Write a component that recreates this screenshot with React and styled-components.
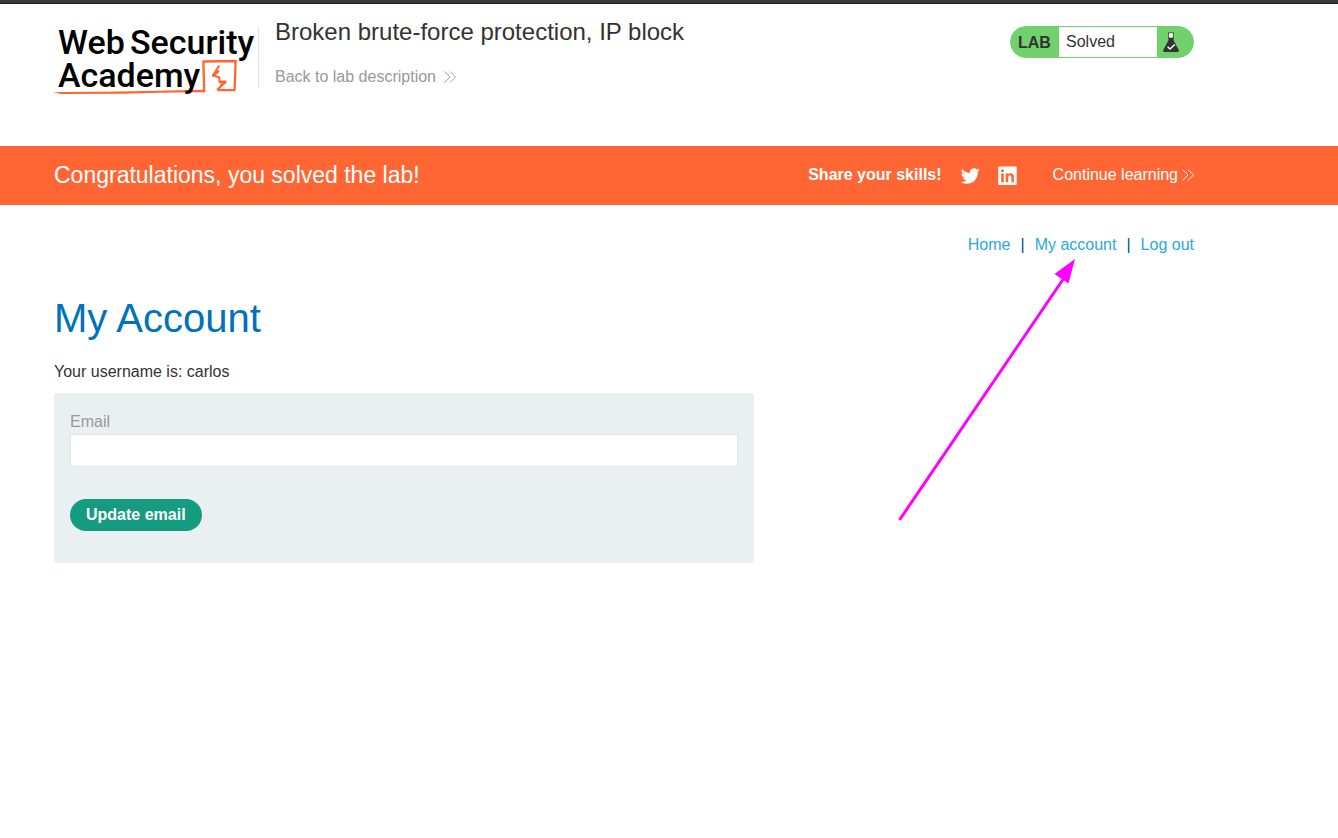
import React from "react";
import styled, { createGlobalStyle } from "styled-components";

const GlobalStyle = createGlobalStyle`
  *, *::before, *::after { box-sizing: border-box; }
  body {
    margin: 0;
    background: #fff;
    color: #333332;
    font-family: "Liberation Sans", Arial, sans-serif;
    font-size: 16px;
    line-height: 20px;
  }
  a { text-decoration: none; }
`;

const TopStrip = styled.div`
  height: 4px;
  background: #383838;
  border-bottom: 1px solid #222;
`;

const Container = styled.div`
  padding: 0 144px 0 54px;
`;

const HeaderRow = styled(Container)`
  display: flex;
  align-items: flex-start;
  height: 142px;
  padding-top: 22px;
`;

const LogoLink = styled.a`
  display: block;
  width: 204px;
  height: 72px;
  flex: none;
`;

const LogoSvg = styled.svg`
  display: block;
  overflow: visible;
`;

const LogoText = styled.text`
  font-family: Roboto, "Liberation Sans", sans-serif;
  font-size: 34px;
  font-weight: 500;
  fill: #000;
`;

const TitleBlock = styled.div`
  display: flex;
  flex-direction: column;
  align-items: flex-start;
  gap: 21px;
  height: 62px;
  padding-left: 16px;
  border-left: 1px solid #e4e4e4;
`;

const LabTitle = styled.h2`
  margin: -8px 0 0;
  font-size: 24px;
  line-height: 28px;
  font-weight: 400;
`;

const BackLink = styled.a`
  display: flex;
  align-items: center;
  gap: 8px;
  color: #999;
`;

const LabStatus = styled.div`
  display: flex;
  width: 184px;
  height: 32px;
  margin-left: auto;
  border: 1px solid #70d16d;
  border-radius: 16px;
  background: #70d16d;
  overflow: hidden;
  line-height: 30px;
`;

const LabTag = styled.span`
  width: 48px;
  padding: 1px 0 0 7px;
  font-weight: 700;
`;

const LabState = styled.span`
  flex: 1;
  padding-left: 7px;
  background: #fff;
`;

const LabIcon = styled.span`
  width: 36px;
  padding: 5px 0 0 6px;
`;

const Banner = styled.section`
  background: #ff6633;
  color: #fff;
`;

const BannerRow = styled(Container)`
  display: flex;
  align-items: center;
  height: 59px;
  padding-bottom: 2px;
`;

const BannerTitle = styled.h4`
  margin: 0;
  font-size: 23px;
  line-height: 28px;
  font-weight: 400;
`;

const BannerActions = styled.div`
  display: flex;
  align-items: center;
  margin-left: auto;
`;

const ShareLink = styled.a`
  display: block;
  height: 20px;
  margin: 2px 0 0 18px;
  color: #fff;
`;

const ContinueLink = styled.a`
  display: flex;
  align-items: center;
  gap: 4px;
  margin-left: 35px;
  color: #fff;
`;

const Main = styled.main`
  padding-top: 30px;
`;

const Nav = styled.nav`
  position: relative;
  display: flex;
  justify-content: flex-end;
  gap: 10px;
  color: #004d8f;
`;

const NavLink = styled.a`
  color: #29a8e0;
`;

const Pointer = styled.svg`
  position: absolute;
  top: 24px;
  right: 118px;
  pointer-events: none;
`;

const PageTitle = styled.h1`
  margin: 39px 0 0;
  color: #0071bc;
  font-size: 40px;
  line-height: 48px;
  font-weight: 400;
`;

const Username = styled.p`
  margin: 20px 0 11px;
`;

const EmailForm = styled.form`
  max-width: 700px;
  padding: 19px 16px 32px;
  border-radius: 2px;
  background: #eaeff2;
`;

const Label = styled.label`
  display: block;
  margin-bottom: 2px;
  color: #999;
`;

const EmailInput = styled.input`
  display: block;
  width: 100%;
  height: 33px;
  padding: 4px 8px;
  border: 1px solid #e4e4e4;
  border-radius: 0;
  background: #fff;
  font: inherit;
`;

const SubmitButton = styled.button`
  display: block;
  height: 32px;
  margin-top: 32px;
  padding: 0 16px;
  border: 0;
  border-radius: 16px;
  background: #159b80;
  color: #fff;
  font: inherit;
  font-weight: 700;
`;

const Chevrons = () => (
  <svg width="12" height="12" viewBox="0 0 12 12" fill="none" stroke="currentColor" strokeWidth="0.9" aria-hidden="true">
    <path d="M0.5 0.5 6 6 0.5 11.5M6 0.5 11.5 6 6 11.5" />
  </svg>
);

const Logo = () => (
  <LogoSvg width="204" height="72" viewBox="0 0 204 72" role="img" aria-label="Web Security Academy">
    <g fill="none" stroke="#ff6633" strokeLinejoin="round" strokeLinecap="round">
      <path d="M150.2 65.3 149.4 36.6 149.4 35.5 181.6 35 180.6 64 164.5 64.2" strokeWidth="2.3" />
      <path d="M164.8 40.2 159 49.3 165.3 51.5 165.6 56 171 56.2 163.7 63.5" strokeWidth="2.1" />
      <path d="M159.3 49.3 164 45.5M166 55.8 171.3 56 167.5 59" strokeWidth="2.8" />
    </g>
    <path d="M-1 66 Q40 66.2 80 65.2 L150 63.8 151 66.2 Q110 66 70 67.7 L7 68 Q4 67 -1 66Z" fill="#ff6633" />
    <LogoText x="4" y="28">Web</LogoText>
    <LogoText x="76" y="28">Security</LogoText>
    <LogoText x="4" y="61">Academy</LogoText>
  </LogoSvg>
);

const Flask = () => (
  <svg width="16" height="21" viewBox="0 0 16 21" aria-hidden="true">
    <path d="M5 .9H11M5.7 1V7M10.3 1V7" stroke="#333332" strokeWidth="0.8" fill="none" />
    <path d="M6.2 1.3h3.6v4.4H6.2z" fill="#fff" />
    <path d="M5.5 5.7h5v2.6L15.8 18q.6 2-1.2 2H1.4q-1.8 0-1.2-2L5.5 8.3z" fill="#333332" />
    <path d="M4.6 14.7 7 17 11.8 12.4" fill="none" stroke="#fff" strokeWidth="1.4" />
  </svg>
);

const Twitter = () => (
  <svg width="20" height="20" viewBox="0 0 24 24" fill="currentColor" aria-hidden="true">
    <path d="M23.643 4.937c-.835.37-1.732.62-2.675.733a4.67 4.67 0 0 0 2.048-2.578 9.3 9.3 0 0 1-2.958 1.13 4.66 4.66 0 0 0-7.938 4.25 13.229 13.229 0 0 1-9.602-4.868c-.4.69-.63 1.49-.63 2.342A4.66 4.66 0 0 0 3.96 9.824a4.647 4.647 0 0 1-2.11-.583v.06a4.66 4.66 0 0 0 3.737 4.568 4.692 4.692 0 0 1-2.104.08 4.661 4.661 0 0 0 4.352 3.234 9.348 9.348 0 0 1-5.786 1.995 9.5 9.5 0 0 1-1.112-.065 13.175 13.175 0 0 0 7.14 2.093c8.57 0 13.255-7.098 13.255-13.254 0-.2-.005-.402-.014-.602a9.47 9.47 0 0 0 2.323-2.41z" />
  </svg>
);

const LinkedIn = () => (
  <svg width="20" height="20" viewBox="0 0 20 20" aria-hidden="true">
    <rect x="0.2" y="0.5" width="18.5" height="18.5" rx="1.2" fill="currentColor" />
    <g fill="#ff6633">
      <circle cx="4.5" cy="4.8" r="1.5" />
      <path d="M3.2 7.4h2.6v8.8H3.2zM7.7 7.4h2.4v1.2c1.2-2 5.8-2.1 5.8 2.1v5.5h-2.5v-4.8c0-2.6-3.2-2.2-3.2 0v4.8H7.7z" />
    </g>
  </svg>
);

export default function App() {
  return (
    <>
      <GlobalStyle />
      <TopStrip />
      <header>
        <HeaderRow>
          <LogoLink href="#academy"><Logo /></LogoLink>
          <TitleBlock>
            <LabTitle>Broken brute-force protection, IP block</LabTitle>
            <BackLink href="#description">Back to lab description <Chevrons /></BackLink>
          </TitleBlock>
          <LabStatus>
            <LabTag>LAB</LabTag>
            <LabState>Solved</LabState>
            <LabIcon><Flask /></LabIcon>
          </LabStatus>
        </HeaderRow>
      </header>
      <Banner>
        <BannerRow>
          <BannerTitle>Congratulations, you solved the lab!</BannerTitle>
          <BannerActions>
            <strong>Share your skills!</strong>
            <ShareLink href="#twitter" aria-label="Share on Twitter"><Twitter /></ShareLink>
            <ShareLink href="#linkedin" aria-label="Share on LinkedIn"><LinkedIn /></ShareLink>
            <ContinueLink href="#learning">Continue learning <Chevrons /></ContinueLink>
          </BannerActions>
        </BannerRow>
      </Banner>
      <Main>
        <Container>
          <Nav>
            <NavLink href="#home">Home</NavLink>
            <span>|</span>
            <NavLink href="#account">My account</NavLink>
            <span>|</span>
            <NavLink href="#logout">Log out</NavLink>
            <Pointer width="178" height="264" viewBox="0 0 178 264" aria-hidden="true">
              <path d="M1.5 261 168 16" stroke="#ff00ff" strokeWidth="3" />
              <path d="M177 0 156.500 15 170.500 24.500z" fill="#ff00ff" />
            </Pointer>
          </Nav>
          <PageTitle>My Account</PageTitle>
          <Username>Your username is: carlos</Username>
          <EmailForm onSubmit={(event) => event.preventDefault()}>
            <Label htmlFor="email">Email</Label>
            <EmailInput id="email" type="email" name="email" />
            <SubmitButton type="submit">Update email</SubmitButton>
          </EmailForm>
        </Container>
      </Main>
    </>
  );
}
